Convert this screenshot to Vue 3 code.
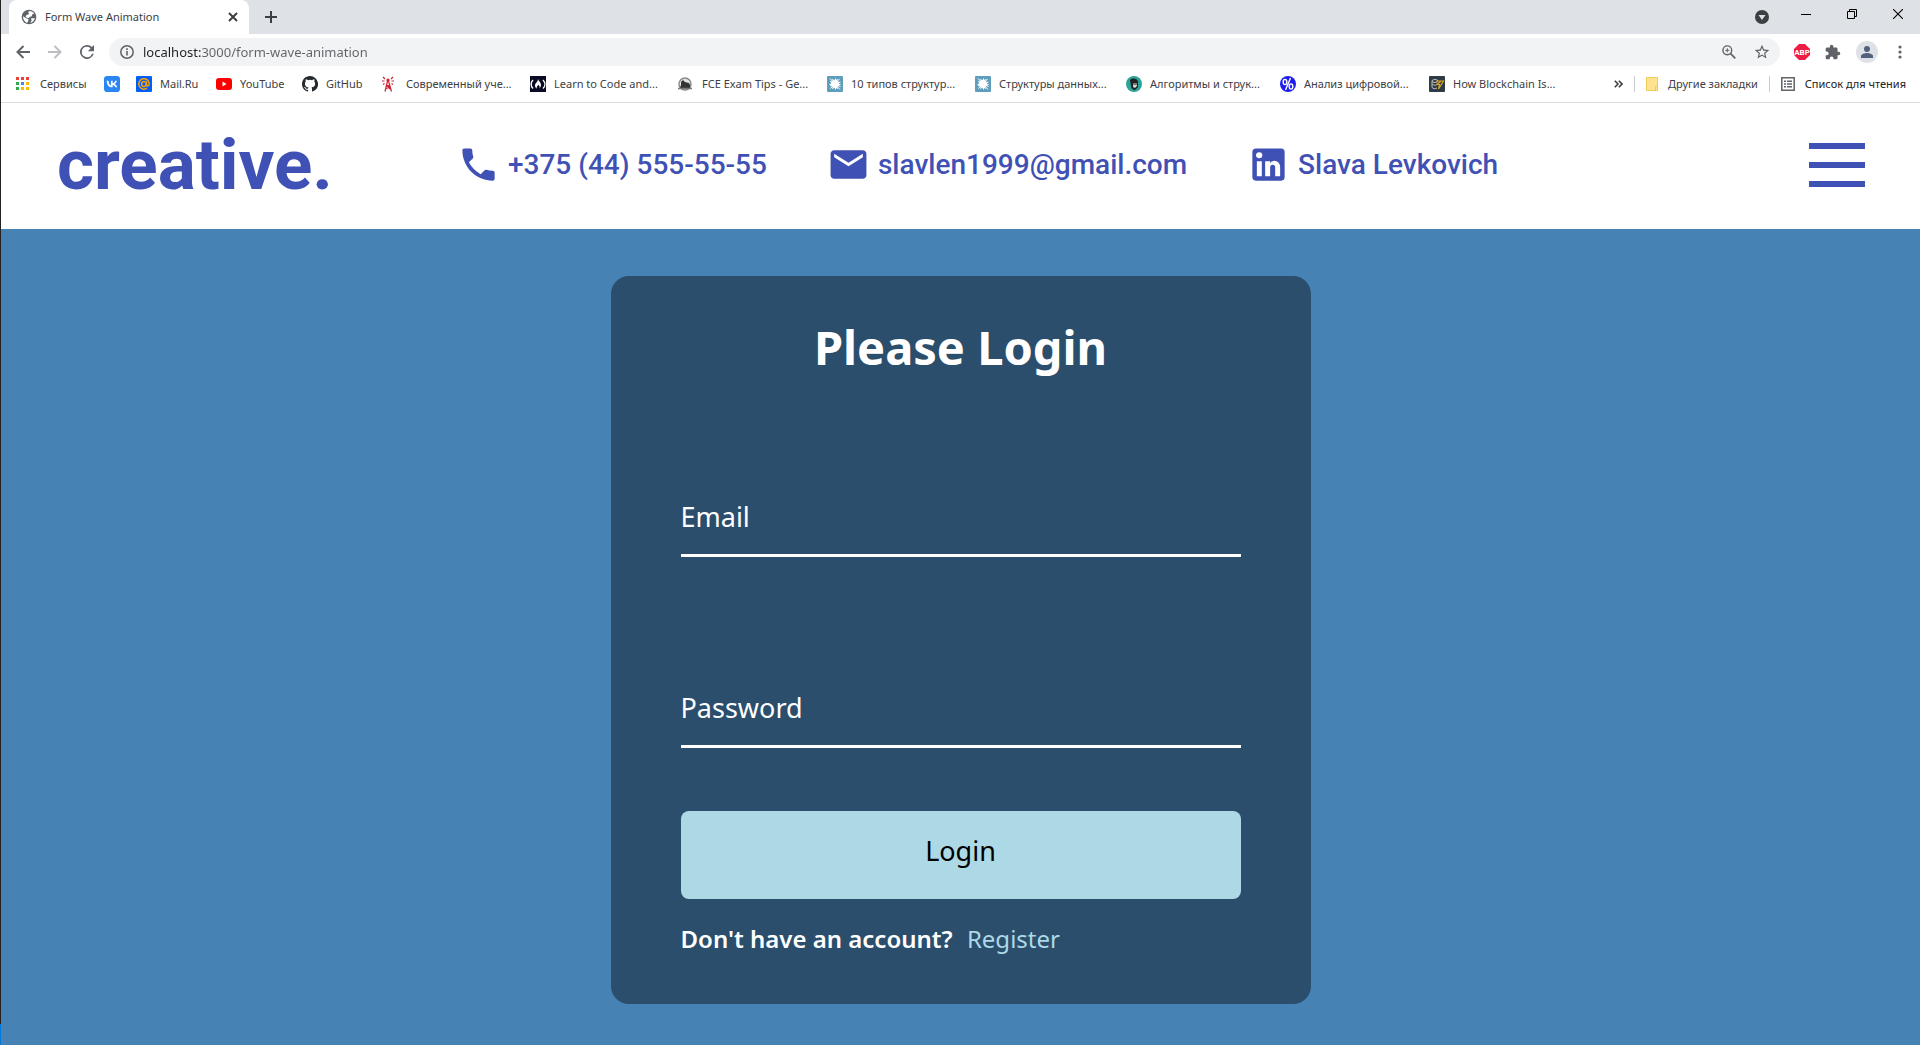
<script setup>
import { ref } from 'vue'

const url = ref('localhost:3000/form-wave-animation')
const email = ref('')
const password = ref('')

const bookmarks = [
  { icon: 'apps', label: 'Сервисы' },
  { icon: 'vk', label: '' },
  { icon: 'mailru', label: 'Mail.Ru' },
  { icon: 'youtube', label: 'YouTube' },
  { icon: 'github', label: 'GitHub' },
  { icon: 'tower', label: 'Современный уче...' },
  { icon: 'fcc', label: 'Learn to Code and...' },
  { icon: 'fce', label: 'FCE Exam Tips - Ge...' },
  { icon: 'splat', label: '10 типов структур...' },
  { icon: 'splat', label: 'Структуры данных...' },
  { icon: 'face', label: 'Алгоритмы и струк...' },
  { icon: 'percent', label: 'Анализ цифровой...' },
  { icon: 'chain', label: 'How Blockchain Is...' },
]

const dots = [
  ['#ea4335', 0, 0], ['#ea4335', 5, 0], ['#ea4335', 10, 0],
  ['#34a853', 0, 5], ['#4285f4', 5, 5], ['#fbbc04', 10, 5],
  ['#34a853', 0, 10], ['#fbbc04', 5, 10], ['#fbbc04', 10, 10],
]
</script>

<template>
  <div class="window">
    <header class="chrome">
      <div class="tabs">
        <div class="tab">
          <svg class="i16" viewBox="0 0 24 24"><circle cx="12" cy="12" r="11" fill="#5f6368" /><path fill="#fff" d="M3 11l5 3 3 1v3l-2 3C5 19 3 16 3 11zM12 3c3 0 6 1 8 4l-3 1-1 3-3 1-2 2-4-2 1-3 4-1-1-3zM15 14h6c-1 3-3 6-7 7l2-4z" /></svg>
          <span class="tab-title">Form Wave Animation</span>
          <button class="plain" aria-label="Close tab"><svg width="10" height="10" viewBox="0 0 10 10"><path d="M1 1l8 8M9 1L1 9" stroke="#3c4043" stroke-width="2" /></svg></button>
        </div>
        <button class="plain new-tab" aria-label="New tab"><svg width="12" height="12" viewBox="0 0 12 12"><path d="M6 0v12M0 6h12" stroke="#3c4043" stroke-width="2" /></svg></button>
        <button class="plain tab-search" aria-label="Search tabs"><svg width="14" height="14" viewBox="0 0 14 14"><circle cx="7" cy="7" r="7" fill="#3c4043" /><path d="M3.500 5h7L7 10z" fill="#dee1e6" /></svg></button>
        <div class="controls">
          <button class="plain" aria-label="Minimize"><svg width="10" height="10" viewBox="0 0 10 10"><path d="M0 5.500h10" stroke="#000" /></svg></button>
          <button class="plain" aria-label="Restore"><svg width="10" height="10" viewBox="0 0 10 10"><path d="M.5 2.500h7v7h-7zM2.500 2.500v-2h7v7h-2" fill="none" stroke="#000" /></svg></button>
          <button class="plain" aria-label="Close"><svg width="10" height="10" viewBox="0 0 10 10"><path d="M0 0l10 10M10 0L0 10" stroke="#000" stroke-width="1.100" /></svg></button>
        </div>
      </div>

      <div class="toolbar">
        <div class="nav-buttons">
          <button class="plain" aria-label="Back"><svg width="14" height="14" viewBox="0 0 14 14"><path d="M14 7H1.500M7.500 1l-6 6 6 6" fill="none" stroke="#5f6368" stroke-width="2" /></svg></button>
          <button class="plain" aria-label="Forward"><svg width="14" height="14" viewBox="0 0 14 14"><path d="M0 7h12.500M6.500 1l6 6-6 6" fill="none" stroke="#bcbec1" stroke-width="2" /></svg></button>
          <button class="plain" aria-label="Reload"><svg width="14" height="14" viewBox="4 4 16 16"><path fill="#5f6368" d="M17.650 6.350A8 8 0 1 0 19.730 14h-2.080A6 6 0 1 1 12 6c1.660 0 3.140.69 4.220 1.780L13 11h7V4z" /></svg></button>
        </div>
        <div class="omnibox">
          <svg width="14" height="14" viewBox="0 0 14 14"><circle cx="7" cy="7" r="6.200" fill="none" stroke="#5f6368" stroke-width="1.500" /><path d="M7 6v4.500M7 3.300v1.700" stroke="#5f6368" stroke-width="1.600" /></svg>
          <input v-model="url" class="url" type="text" aria-label="Address" />
          <button class="plain" aria-label="Zoom"><svg width="14" height="14" viewBox="0 0 14 14"><circle cx="5.300" cy="5.300" r="4.400" fill="none" stroke="#5f6368" stroke-width="1.400" /><path d="M8.600 8.600l4.700 4.700" stroke="#5f6368" stroke-width="1.700" /><path d="M5.300 3.200v4.200M3.200 5.300h4.200" stroke="#5f6368" /></svg></button>
          <button class="plain" aria-label="Bookmark this page"><svg width="16" height="16" viewBox="1 1 22 22"><path fill="#5f6368" d="M22 9.240l-7.190-.62L12 2 9.190 8.630 2 9.240l5.460 4.730L5.820 21 12 17.270 18.180 21l-1.630-7.030zM12 15.400l-3.760 2.270 1-4.280-3.320-2.880 4.380-.38L12 6.100l1.710 4.040 4.380.38-3.320 2.880 1 4.280z" /></svg></button>
        </div>
        <div class="extensions">
          <button class="plain" aria-label="Adblock Plus">
            <svg width="16" height="16" viewBox="0 0 16 16"><path fill="#ed1e45" d="M5 0h6l5 5v6l-5 5H5l-5-5V5z" /><text x="8" y="11" text-anchor="middle" fill="#fff" font-size="8" font-weight="700" font-family="Roboto, sans-serif">ABP</text></svg>
          </button>
          <button class="plain" aria-label="Extensions"><svg width="16" height="16" viewBox="1 0 23 23"><path fill="#5f6368" d="M20.500 11H19V7a2 2 0 0 0-2-2h-4V3.500a2.500 2.500 0 0 0-5 0V5H4a2 2 0 0 0-2 2v3.800h1.500a2.700 2.700 0 0 1 0 5.400H2V20c0 1.100.9 2 2 2h3.800v-1.500a2.700 2.700 0 0 1 5.400 0V22H17a2 2 0 0 0 2-2v-4h1.500a2.500 2.500 0 0 0 0-5z" /></svg></button>
          <button class="plain avatar" aria-label="Profile"><svg width="12" height="12" viewBox="0 0 12 12"><circle cx="6" cy="3" r="3" fill="#52627c" /><path d="M0 12v-2c0-2 4-3 6-3s6 1 6 3v2z" fill="#52627c" /></svg></button>
          <button class="plain" aria-label="Menu"><svg width="14" height="14" viewBox="0 0 14 14"><g fill="#5f6368"><circle cx="7" cy="2" r="1.600" /><circle cx="7" cy="7" r="1.600" /><circle cx="7" cy="12" r="1.600" /></g></svg></button>
        </div>
      </div>

      <nav class="bookmarks" aria-label="Bookmarks">
        <div class="bookmark-list">
          <a v-for="(b, i) in bookmarks" :key="i" href="#" class="bookmark" :aria-label="b.label || 'VK'">
            <svg v-if="b.icon === 'apps'" class="i16" viewBox="0 0 16 16"><rect v-for="(d, n) in dots" :key="n" :x="d[1]" :y="d[2] + 1" width="3" height="3" :fill="d[0]" /></svg>
            <svg v-else-if="b.icon === 'vk'" class="i16" viewBox="0 0 24 24"><rect width="24" height="24" rx="5" fill="#2787f5" /><path fill="#fff" d="M12.800 17C7.300 17 4.200 13.200 4 7h2.800c.1 4.500 2.100 6.400 3.600 6.800V7H13v3.900c1.600-.2 3.200-1.900 3.800-3.900h2.600c-.4 2.400-2.200 4.100-3.500 4.900 1.300.6 3.300 2.200 4.100 5.100h-2.900c-.6-1.900-2.100-3.400-4.100-3.600V17z" /></svg>
            <svg v-else-if="b.icon === 'mailru'" class="i16" viewBox="0 0 16 16"><rect width="16" height="16" rx="1" fill="#005ff9" /><g fill="none" stroke="#ff9e00" stroke-width="1.500"><circle cx="8" cy="8" r="2.400" /><path d="M10.400 5.500v3.200c0 2 2.800 1.600 2.800-.7a5.200 5.200 0 1 0-2.200 4.200" /></g></svg>
            <svg v-else-if="b.icon === 'youtube'" class="i16" viewBox="0 0 16 16"><rect y="2" width="16" height="12" rx="3" fill="#f00" /><path d="M6.500 5.500v5L10.500 8z" fill="#fff" /></svg>
            <svg v-else-if="b.icon === 'github'" class="i16" viewBox="0 0 16 16"><path fill="#24292e" d="M8 0C3.580 0 0 3.580 0 8c0 3.540 2.290 6.530 5.470 7.590.4.070.55-.17.55-.38v-1.490c-2.010.37-2.530-.49-2.690-.94-.09-.23-.48-.94-.82-1.130-.28-.15-.68-.52-.01-.53.630-.01 1.080.58 1.230.82.720 1.210 1.870.87 2.330.66.070-.52.280-.87.510-1.070-1.780-.2-3.640-.89-3.640-3.950 0-.87.310-1.590.820-2.150-.08-.2-.36-1.020.080-2.120 0 0 .67-.21 2.200.82a7.600 7.600 0 0 1 4 0c1.530-1.040 2.200-.82 2.200-.82.440 1.100.160 1.920.080 2.120.51.560.820 1.270.820 2.150 0 3.070-1.870 3.750-3.650 3.950.29.250.54.730.54 1.480v2.200c0 .21.150.46.550.38A8 8 0 0 0 8 0z" /></svg>
            <svg v-else-if="b.icon === 'tower'" class="i16" viewBox="0 0 16 16"><g fill="none" stroke="#cf2030" stroke-width="1.200"><path d="M5.500 5L3 15.500M6.500 5l3 10.500M4.500 9.500h3.500M3.500 13l4.500-3M4.500 10l4.500 3.500" /><path d="M1 1l2 2M0 5h2.500M2.500 7.500L1 8.500M11 1L9 3M12 5H9.500M9.500 7.500l1.500 1" /></g><circle cx="6" cy="4" r="1.600" fill="#cf2030" /></svg>
            <svg v-else-if="b.icon === 'fcc'" class="i16" viewBox="0 0 16 16"><rect width="16" height="16" fill="#0a0a23" /><g fill="none" stroke="#fff" stroke-width="1.400"><path d="M3 4C.5 6.500.5 10 3 12.500M13 4c2.500 2.500 2.500 6 0 8.500" /></g><path d="M8 3c.5 2 3 3.500 3 6 0 2-1.500 3-1.500 3 .5-2-.5-2-1-3.500-.5 1.500-2.500 2-1.500 4C5.500 12 5 10.500 5 9.500 5 7 8 6 8 3z" fill="#fff" /></svg>
            <svg v-else-if="b.icon === 'fce'" class="i16" viewBox="0 0 16 16"><circle cx="7" cy="8" r="6" fill="#e4e4e4" stroke="#8a8a8a" stroke-width="1.500" /><path d="M3 9V6l2-2 2 2 4 1 1 2v3H2z" fill="#333" /><path d="M0 12.500h14" stroke="#777" stroke-width="1.500" /></svg>
            <svg v-else-if="b.icon === 'splat'" class="i16" viewBox="0 0 16 16"><rect width="16" height="16" rx="1" fill="#5f9dbd" /><circle cx="8" cy="8" r="4.200" fill="#fff" /><path d="M3 2.500l10 11M12.500 3l-9 9.500M2.500 8.500h11M8.500 2.500v11M5.500 3l5 10M3 5.500l10.500 5M10.500 3l-5 10M13.500 6L3 10" stroke="#fff" /></svg>
            <svg v-else-if="b.icon === 'face'" class="i16" viewBox="0 0 16 16"><circle cx="8" cy="8" r="8" fill="#2aa39a" /><path d="M4 4c3-3 8-1 8 2v5l-3 3c-2 0-4-2-4-4z" fill="#222" /><path d="M7 7h4v3l-2 2-2-1z" fill="#cfd8d6" /><path d="M7 8h4" stroke="#222" /></svg>
            <svg v-else-if="b.icon === 'percent'" class="i16" viewBox="0 0 16 16"><circle cx="8" cy="8" r="8" fill="#1d1df0" /><g fill="none" stroke="#fff" stroke-width="1.400"><ellipse cx="5" cy="6" rx="1.800" ry="2.600" /><ellipse cx="11" cy="10.500" rx="1.800" ry="2.600" /><path d="M10.500 2L5.500 14" /></g></svg>
            <svg v-else class="i16" viewBox="0 0 16 16"><rect width="16" height="16" rx="1" fill="#2f3c46" /><g fill="none" stroke="#b8bec2"><ellipse cx="6" cy="5" rx="3" ry="1.500" /><path d="M3 5v6c0 2 4 2 5 1M3 8c1 1.500 4 1.500 5 .5" /></g><path d="M7 5h7.500l-5 8 1-4.500H8L12 5" fill="none" stroke="#d9a520" stroke-width="1.200" /></svg>
            <span v-if="b.label">{{ b.label }}</span>
          </a>
        </div>
        <div class="bookmark-end">
          <button class="plain" aria-label="More bookmarks"><svg width="9" height="8" viewBox="0 0 9 8"><path d="M.8.8L4 4 .8 7.200M4.800.8L8 4 4.800 7.200" fill="none" stroke="#3c4043" stroke-width="1.600" /></svg></button>
          <span class="divider"></span>
          <a href="#" class="bookmark"><svg width="12" height="14" viewBox="0 0 12 14"><path d="M.5.5h11v13H.5z" fill="#ffe391" stroke="#eecb53" /><path d="M9.500 13V9.500h2" fill="none" stroke="#eecb53" /></svg><span>Другие закладки</span></a>
          <span class="divider"></span>
          <a href="#" class="bookmark reading"><svg width="14" height="14" viewBox="0 0 14 14"><path d="M.8.8h12.400v12.400H.8z" fill="none" stroke="#5f6368" stroke-width="1.500" /><path d="M3 4.200h2M6 4.200h5M3 7h2M6 7h5M3 9.800h2M6 9.800h5" stroke="#5f6368" stroke-width="1.500" /></svg><span>Список для чтения</span></a>
        </div>
      </nav>
    </header>

    <header class="site-header">
      <a href="#" class="logo">creative.</a>
      <address class="contacts">
        <a href="tel:+375445555555"><svg viewBox="0 0 24 24"><path d="M6.620 10.790c1.440 2.830 3.760 5.140 6.590 6.590l2.200-2.200c.27-.27.670-.36 1.020-.24 1.120.37 2.330.57 3.570.57.55 0 1 .45 1 1V20c0 .55-.45 1-1 1C10.610 21 3 13.390 3 4c0-.55.450-1 1-1h3.500c.55 0 1 .45 1 1 0 1.250.2 2.450.57 3.570.11.350.030.740-.25 1.020z" /></svg><span>+375 (44) 555-55-55</span></a>
        <a href="mailto:slavlen1999@gmail.com"><svg viewBox="0 0 24 24"><path d="M20 4H4c-1.100 0-2 .9-2 2v12c0 1.100.9 2 2 2h16c1.100 0 2-.9 2-2V6c0-1.100-.9-2-2-2zm0 4l-8 5-8-5V6l8 5 8-5z" /></svg><span>slavlen1999@gmail.com</span></a>
        <a href="#"><svg viewBox="0 0 24 24"><path d="M19 3a2 2 0 0 1 2 2v14a2 2 0 0 1-2 2H5a2 2 0 0 1-2-2V5a2 2 0 0 1 2-2zm-.500 15.500v-5.300a3.260 3.260 0 0 0-3.260-3.260c-.85 0-1.840.52-2.320 1.300v-1.110h-2.790v8.370h2.790v-4.930a1.400 1.400 0 0 1 2.800 0v4.930zM6.880 8.560a1.680 1.680 0 0 0 0-3.360 1.690 1.690 0 1 0 0 3.360zm1.390 9.940v-8.370H5.500v8.370z" /></svg><span>Slava Levkovich</span></a>
      </address>
      <button class="plain burger" aria-label="Open menu"><span></span><span></span><span></span></button>
    </header>

    <main class="page">
      <form class="card" @submit.prevent>
        <h1>Please Login</h1>
        <div class="field">
          <input id="email" v-model="email" type="text" autocomplete="off" />
          <label for="email">Email</label>
        </div>
        <div class="field">
          <input id="password" v-model="password" type="password" autocomplete="off" />
          <label for="password">Password</label>
        </div>
        <button class="submit" type="submit">Login</button>
        <p class="register">Don't have an account? <a href="#">Register</a></p>
      </form>
    </main>
  </div>
</template>

<style>
body {
  margin: 0;
}
</style>

<style scoped>
* {
  box-sizing: border-box;
}
a {
  color: inherit;
  text-decoration: none;
}
svg {
  display: block;
  flex: none;
}
.window {
  display: flex;
  flex-direction: column;
  min-height: 100vh;
  padding-left: 1px;
  background: linear-gradient(#222 98%, #0078d7 98%);
}
.plain {
  display: flex;
  align-items: center;
  justify-content: center;
  padding: 0;
  border: 0;
  background: none;
}
.i16 {
  width: 16px;
  height: 16px;
}

/* browser frame */
.chrome {
  background: #fff;
  border-bottom: 1px solid #dadce0;
  font: 11px/16px "Noto Sans", sans-serif;
  color: #3c4043;
}
.tabs {
  display: flex;
  align-items: center;
  height: 34px;
  padding: 0 17px 0 8px;
  background: #dee1e6;
}
.tab {
  display: flex;
  align-items: center;
  gap: 8px;
  width: 240px;
  height: 34px;
  padding: 0 11px 0 12px;
  border-radius: 8px 8px 0 0;
  background: #fff;
}
.tab-title {
  flex: 1;
  white-space: nowrap;
}
.new-tab {
  margin-left: 16px;
}
.tab-search {
  margin: 0 32px 0 auto;
}
.controls {
  display: flex;
  align-items: center;
  gap: 36px;
  padding-bottom: 6px;
}
.toolbar {
  display: flex;
  align-items: center;
  height: 36px;
  padding: 0 13px 0 15px;
}
.nav-buttons {
  display: flex;
  gap: 18px;
  margin-right: 15px;
}
.omnibox {
  display: flex;
  flex: 1;
  align-items: center;
  gap: 18px;
  height: 28px;
  padding: 0 10px 0 11px;
  border-radius: 14px;
  background: #f1f3f4;
}
.url {
  flex: 1;
  min-width: 0;
  height: 20px;
  margin-left: -9px;
  padding: 0;
  border: 0;
  outline: 0;
  background: linear-gradient(90deg, #202124 58px, #5f6368 58px);
  background-clip: text;
  -webkit-text-fill-color: transparent;
  font: 13px/20px "Noto Sans", sans-serif;
}
.extensions {
  display: flex;
  align-items: center;
  gap: 15px;
  margin-left: 14px;
}
.avatar {
  width: 22px;
  height: 22px;
  border-radius: 50%;
  background: #dee1e6;
}
.bookmarks {
  display: flex;
  align-items: center;
  justify-content: space-between;
  height: 32px;
  padding: 0 14px 4px 15px;
}
.bookmark-list {
  display: grid;
  grid-template-columns: 88px 32px 80px 86px 80px 148px 148px 149px 148px 151px 154px 149px 140px;
}
.bookmark {
  display: flex;
  align-items: center;
  gap: 8px;
  white-space: nowrap;
}
.bookmark-end {
  display: flex;
  align-items: center;
  gap: 11px;
}
.bookmark-end .bookmark {
  gap: 10px;
}
.divider {
  width: 1px;
  height: 16px;
  background: #c8cacd;
}
.reading {
  color: #202124;
}

/* site header */
.site-header {
  display: flex;
  align-items: center;
  height: 126px;
  padding: 0 55px 3px 56px;
  background: #fff;
  color: #3f51b5;
  font-family: Roboto, sans-serif;
}
.logo {
  width: 272px;
  font-size: 71px;
  font-weight: 700;
  line-height: 84px;
}
.contacts {
  display: flex;
  gap: 60px;
  margin-left: 128px;
  font-size: 28px;
  font-style: normal;
  font-weight: 500;
  line-height: 32px;
  white-space: nowrap;
}
.contacts a {
  display: flex;
  align-items: center;
  gap: 8px;
}
.contacts svg {
  width: 43px;
  height: 43px;
  fill: currentColor;
}
.burger {
  flex-direction: column;
  gap: 13px;
  margin-left: auto;
}
.burger span {
  width: 56px;
  height: 6px;
  background: #3f51b5;
}

/* login form */
.page {
  flex: 1;
  padding: 47px 20px 41px;
  background: #4682b4;
}
.card {
  max-width: 700px;
  margin: 0 auto;
  padding: 42px 70px 50px;
  border-radius: 18px;
  background: rgba(0, 0, 0, 0.4);
  color: #fff;
  font-family: "Noto Sans", sans-serif;
}
h1 {
  margin: 0 0 107px;
  font-size: 47px;
  font-weight: 700;
  line-height: 58px;
  text-align: center;
}
.field {
  display: grid;
  margin-bottom: 117px;
  font-size: 27px;
  line-height: 34px;
}
.field + .field {
  margin-bottom: 63px;
}
.field input,
.field label {
  grid-area: 1 / 1;
}
.field input {
  width: 100%;
  height: 74px;
  padding: 0;
  border: 0;
  border-bottom: 3px solid #fff;
  outline: 0;
  background: none;
  color: inherit;
  font: inherit;
}
.field label {
  justify-self: start;
  padding-top: 17px;
}
.submit {
  display: block;
  width: 100%;
  height: 88px;
  padding: 0 0 8px;
  border: 0;
  border-radius: 8px;
  background: #add8e6;
  color: #000;
  font: 27px/34px "Noto Sans", sans-serif;
}
.register {
  margin: 25px 0 0;
  font-size: 24px;
  font-weight: 600;
  line-height: 30px;
}
.register a {
  margin-left: 8px;
  color: #add8e6;
  font-weight: 400;
}
</style>
